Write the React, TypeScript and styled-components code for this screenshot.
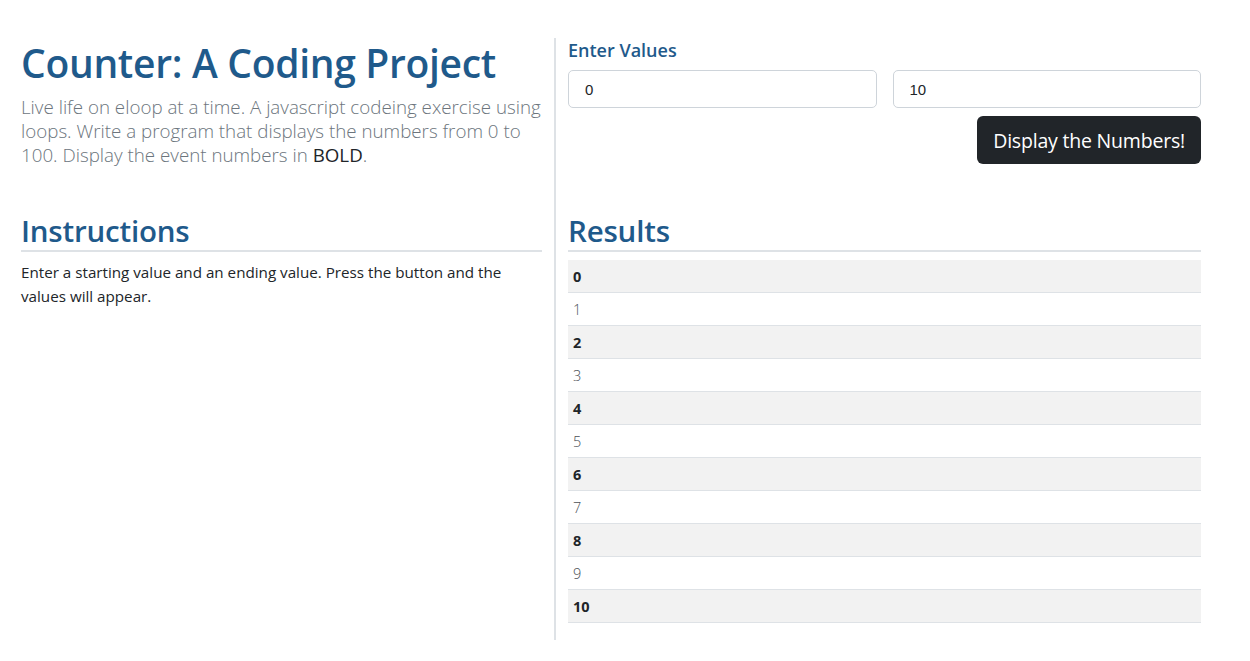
import React from "react";
import styled, { createGlobalStyle } from "styled-components";

const GlobalStyle = createGlobalStyle`
  html, body {
    margin: 0;
    padding: 0;
    background: #ffffff;
  }
  body {
    font-family: "Open Sans", "Noto Sans", sans-serif;
    color: #212529;
  }
  * { box-sizing: border-box; }
`;

const Page = styled.div`
  display: grid;
  grid-template-columns: 533px 647px;
  padding: 38px 48px 21px 21px;
`;

const LeftCell = styled.section<{ $bottom?: number }>`
  padding-right: 12px;
  padding-bottom: ${(p) => p.$bottom ?? 0}px;
`;

const RightCell = styled.section<{ $bottom?: number }>`
  border-left: 2px solid #dee2e6;
  padding-left: 12px;
  padding-bottom: ${(p) => p.$bottom ?? 0}px;
`;

const Title = styled.h1`
  margin: 0 0 7px;
  font-size: 39px;
  line-height: 50px;
  font-weight: 600;
  color: #1f5a8b;
  letter-spacing: -0.3px;
`;

const Lead = styled.p`
  margin: 0;
  font-size: 18.75px;
  line-height: 24px;
  font-weight: 300;
  color: #6c757d;
`;

const Strong = styled.span`
  color: #212529;
  font-weight: 400;
`;

const SectionHeading = styled.h2`
  margin: 0 0 8px;
  font-size: 29.5px;
  line-height: 38px;
  font-weight: 600;
  color: #1f5a8b;
  border-bottom: 2px solid #dee2e6;
  letter-spacing: -0.2px;
`;

const BodyText = styled.p`
  margin: 0;
  font-size: 15.2px;
  line-height: 24px;
`;

const Label = styled.h5`
  margin: 0 0 8px;
  font-size: 18px;
  line-height: 24px;
  font-weight: 600;
  color: #1f5a8b;
`;

const InputRow = styled.div`
  display: grid;
  grid-template-columns: 1fr 1fr;
  gap: 16px;
`;

const Input = styled.input`
  height: 38px;
  width: 100%;
  border: 1px solid #ced4da;
  border-radius: 5px;
  padding: 0 16px;
  font-family: "Liberation Sans", Arial, sans-serif;
  font-size: 15px;
  color: #212529;
  background: #fff;
`;

const ButtonRow = styled.div`
  display: flex;
  justify-content: flex-end;
  margin-top: 8px;
`;

const Button = styled.button`
  height: 48px;
  padding: 0 16px;
  border: none;
  border-radius: 6px;
  background: #212529;
  color: #ffffff;
  font-family: "Open Sans", "Noto Sans", sans-serif;
  font-size: 19.5px;
  letter-spacing: -0.2px;
`;

const Table = styled.div`
  display: flex;
  flex-direction: column;
  margin-top: 8px;
`;

const Row = styled.div<{ $even: boolean }>`
  height: 33px;
  padding: 0 5px;
  display: flex;
  align-items: center;
  border-bottom: 1px solid #dee2e6;
  background: ${(p) => (p.$even ? "#f2f2f2" : "#ffffff")};
  font-family: "Open Sans", "Noto Sans", sans-serif;
  font-size: 14.5px;
  font-weight: ${(p) => (p.$even ? 700 : 300)};
  color: ${(p) => (p.$even ? "#212529" : "#4a5056")};
`;

export default function App() {
  const start = 0;
  const end = 10;
  const values: number[] = [];
  for (let i = start; i <= end; i++) values.push(i);

  return (
    <>
      <GlobalStyle />
      <Page>
        <LeftCell $bottom={45}>
          <Title>Counter: A Coding Project</Title>
          <Lead>
            Live life on eloop at a time. A javascript codeing exercise using
            loops. Write a program that displays the numbers from 0 to 100.
            Display the event numbers in <Strong>BOLD</Strong>.
          </Lead>
        </LeftCell>
        <RightCell $bottom={45}>
          <Label>Enter Values</Label>
          <InputRow>
            <Input defaultValue="0" />
            <Input defaultValue="10" />
          </InputRow>
          <ButtonRow>
            <Button>Display the Numbers!</Button>
          </ButtonRow>
        </RightCell>
        <LeftCell>
          <SectionHeading>Instructions</SectionHeading>
          <BodyText>
            Enter a starting value and an ending value. Press the button and the
            values will appear.
          </BodyText>
        </LeftCell>
        <RightCell $bottom={17}>
          <SectionHeading>Results</SectionHeading>
          <Table>
            {values.map((v) => (
              <Row key={v} $even={v % 2 === 0}>
                {v}
              </Row>
            ))}
          </Table>
        </RightCell>
      </Page>
    </>
  );
}
